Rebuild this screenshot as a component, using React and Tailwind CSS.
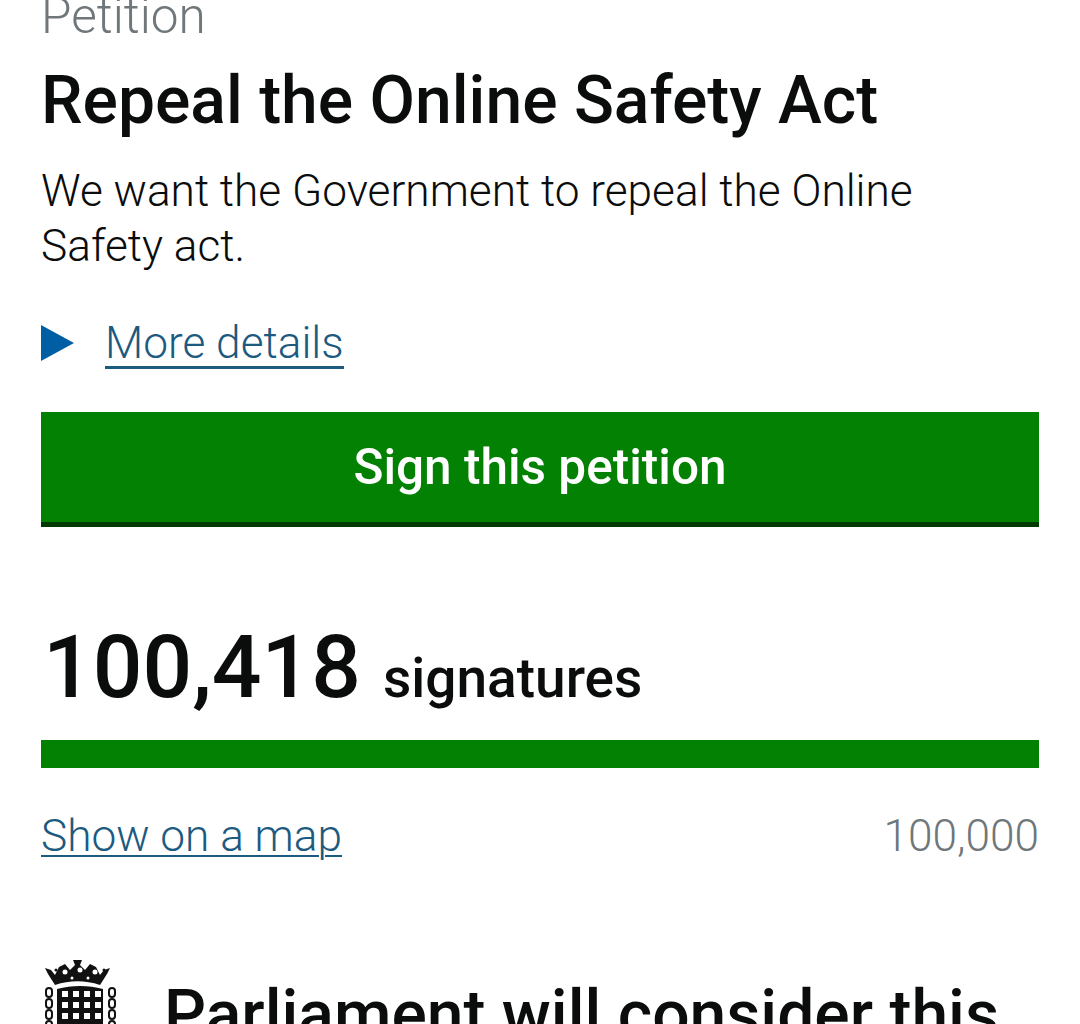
const font = "font-['Roboto',sans-serif]";

function Portcullis() {
  const cells = [];
  for (let r = 0; r < 5; r++) {
    for (let c = 0; c < 4; c++) {
      cells.push(<rect key={`${r}-${c}`} x={18 + c * 11} y={33 + r * 11} width="6" height="6" fill="#fff" />);
    }
  }
  const links = [];
  for (let i = 0; i < 5; i++) {
    links.push(<rect key={`l${i}`} x="2" y={30 + i * 11} width="6" height="9" rx="3" fill="none" stroke="#111" strokeWidth="2" />);
    links.push(<rect key={`r${i}`} x="65" y={30 + i * 11} width="6" height="9" rx="3" fill="none" stroke="#111" strokeWidth="2" />);
  }
  return (
    <svg width="73" height="88" viewBox="0 0 73 88" className="shrink-0 ml-[3px]">
      {/* crown */}
      <path d="M1 10l6 2 4 5 4-8 6-3 5 6 5-5-2-5h9l-2 5 5 5 5-6 6 3 4 8 4-5 6-2-3 6-7 11c-15-5-30-5-45 0L4 16z" fill="#111" />
      <circle cx="12" cy="12" r="1.5" fill="#111" />
      <circle cx="60" cy="12" r="1.5" fill="#111" />
      <circle cx="21" cy="14" r="2.5" fill="#fff" />
      <circle cx="36" cy="12" r="2.5" fill="#fff" />
      <circle cx="51" cy="14" r="2.5" fill="#fff" />
      <circle cx="28" cy="20" r="1.5" fill="#fff" />
      <circle cx="44" cy="20" r="1.5" fill="#fff" />
      {/* portcullis */}
      <path d="M13 31c15-4 31-4 46 0v57H13z" fill="#111" />
      {cells}
      {links}
    </svg>
  );
}

export default function App() {
  return (
    <div className={`${font} w-[1080px] h-[1024px] overflow-hidden bg-white px-[41px]`}>
      <p className="text-[49.5px] leading-[47px] -mt-[7px] font-light text-[#6f777b]">Petition</p>
      <h1 className="mt-[26px] text-[66px] leading-[70px] font-medium text-[#0b0c0c]">Repeal the Online Safety Act</h1>
      <p className="mt-[28px] text-[44.2px] leading-[55px] font-light text-[#0b0c0c]">We want the Government to repeal the Online Safety act.</p>
      <div className="mt-[46px] flex items-center gap-[31px]">
        <svg width="33" height="36" viewBox="0 0 33 36" className="-mt-[4px]"><path d="M0 0l33 18L0 36z" fill="#005ea5" /></svg>
        <a className="text-[44.2px] leading-[46px] font-light text-[#1d5a80] border-b-[3px] border-[#1d5a80]">More details</a>
      </div>
      <button className="mt-[43px] w-full h-[115px] bg-[#028102] border-b-[5px] border-[#023a02] text-white text-[49.5px] font-medium">Sign this petition</button>
      <div className="mt-[95px] flex items-baseline gap-[22px] pl-[2px]">
        <span className="text-[87.5px] leading-[90px] font-medium text-[#0b0c0c]">100,418</span>
        <span className="text-[55px] font-medium text-[#0b0c0c]">signatures</span>
      </div>
      <div className="mt-[20px] h-[28px] bg-[#028102]" />
      <div className="mt-[43px] flex justify-between">
        <a className="text-[44.2px] leading-[50px] font-light text-[#1d5a80] underline underline-offset-4 decoration-2">Show on a map</a>
        <span className="text-[44.2px] leading-[50px] font-light text-[#6f777b]">100,000</span>
      </div>
      <div className="mt-[97px] flex items-start gap-[47px]">
        <Portcullis />
        <p className="mt-[22px] whitespace-nowrap text-[66px] leading-[70px] font-medium text-[#0b0c0c]">Parliament will consider this</p>
      </div>
    </div>
  );
}
